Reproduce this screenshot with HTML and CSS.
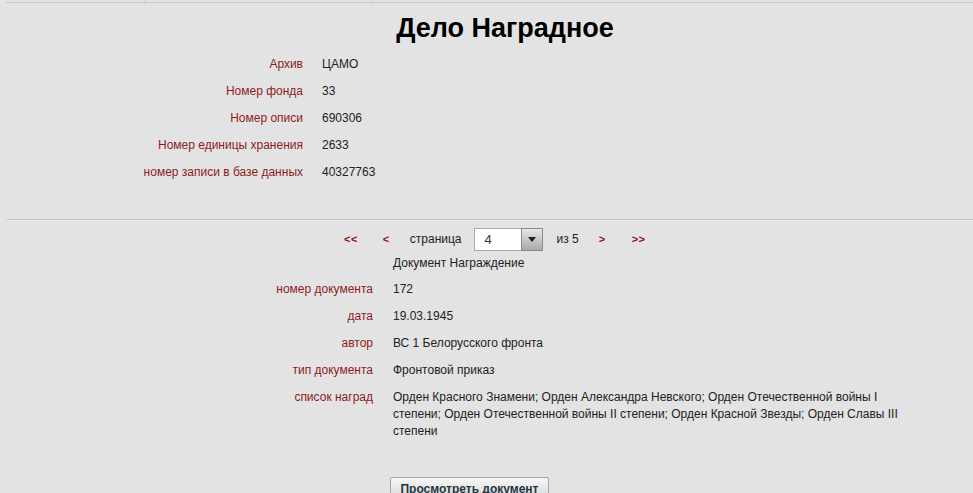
FILE: index.html
```html
<!DOCTYPE html>
<html lang="ru">
<head>
<meta charset="utf-8">
<title>Дело Наградное</title>
<link rel="stylesheet" href="styles.css">
</head>
<body>
<div class="page">
  <div class="topbar">
    <div class="tab tab-1"></div>
    <div class="tab tab-2"></div>
    <div class="tab tab-3"></div>
  </div>
  <h1 class="title">Дело Наградное</h1>
  <div class="info info-main">
    <div class="lbl">Архив</div><div class="val">ЦАМО</div>
    <div class="lbl">Номер фонда</div><div class="val">33</div>
    <div class="lbl">Номер описи</div><div class="val">690306</div>
    <div class="lbl">Номер единицы хранения</div><div class="val">2633</div>
    <div class="lbl">номер записи в базе данных</div><div class="val">40327763</div>
  </div>
  <div class="divider"></div>
  <div class="pager">
    <span class="arrow a-first">&lt;&lt;</span>
    <span class="arrow a-prev">&lt;</span>
    <span class="ptext p-page">страница</span>
    <span class="select">
      <span class="select-value">4</span>
      <span class="select-btn"><span class="tri"></span></span>
    </span>
    <span class="ptext p-of">из 5</span>
    <span class="arrow a-next">&gt;</span>
    <span class="arrow a-last">&gt;&gt;</span>
  </div>
  <div class="info info-doc">
    <div class="lbl first"></div><div class="val first">Документ Награждение</div>
    <div class="lbl">номер документа</div><div class="val">172</div>
    <div class="lbl">дата</div><div class="val">19.03.1945</div>
    <div class="lbl">автор</div><div class="val">ВС 1 Белорусского фронта</div>
    <div class="lbl">тип документа</div><div class="val">Фронтовой приказ</div>
    <div class="lbl">список наград</div><div class="val">Орден Красного Знамени; Орден Александра Невского; Орден Отечественной войны I степени; Орден Отечественной войны II степени; Орден Красной Звезды; Орден Славы III степени</div>
  </div>
  <div class="actions">
    <button class="btn" type="button">Просмотреть документ</button>
  </div>
</div>
</body>
</html>
```
FILE: styles.css
```css
html, body {
  margin: 0;
  padding: 0;
  background: #e3e3e3;
  overflow: hidden;
}
body {
  font-family: "Liberation Sans", Arial, sans-serif;
  font-size: 12px;
  color: #222;
  width: 973px;
  height: 493px;
}
.page {
  padding-left: 6px;
}
.topbar {
  display: flex;
  height: 2px;
  border-bottom: 1px solid #c4cbc9;
}
.tab {
  height: 2px;
  border-right: 1px solid #cdd3d1;
}
.tab-1 { width: 138px; }
.tab-2 { width: 226px; }
.tab-3 { flex: 1; border-right: none; }

.title {
  margin: 10px 0 0 0;
  font-size: 27px;
  line-height: 30px;
  font-weight: bold;
  color: #000;
  text-align: center;
  padding-left: 31px;
}
.info {
  display: grid;
  column-gap: 19px;
  align-items: start;
}
.info-main {
  margin-top: 8px;
  grid-template-columns: 297px auto;
}
.info-doc {
  grid-template-columns: 367px 515px;
  column-gap: 20px;
}
.lbl, .val {
  padding: 5px 0;
  line-height: 17px;
}
.lbl {
  text-align: right;
  color: #8e1c1c;
}
.val {
  color: #222;
}
.lbl.first, .val.first {
  padding-bottom: 4px;
}
.divider {
  margin-top: 33px;
  height: 1px;
  background: #c2c9c7;
  border-bottom: 1px solid #ececec;
}
.pager {
  display: flex;
  align-items: center;
  height: 22px;
  margin-top: 7px;
  padding-left: 338px;
}
.arrow {
  font-weight: bold;
  color: #8b1010;
  font-size: 11px;
  letter-spacing: 0.5px;
}
.a-prev { margin-left: 25px; }
.p-page { margin-left: 20px; }
.select {
  margin-left: 12px;
  display: flex;
  height: 23px;
  box-sizing: border-box;
}
.select-value {
  width: 47px;
  box-sizing: border-box;
  height: 23px;
  background: #fff;
  border: 1px solid #a9a9a9;
  border-right: none;
  padding-left: 10px;
  font-size: 13px;
  line-height: 21px;
  color: #1c3a44;
}
.select-btn {
  width: 22px;
  height: 23px;
  box-sizing: border-box;
  border: 1px solid #8a8a8a;
  background: linear-gradient(#e8e8e8, #a8a8a8);
  display: flex;
  align-items: center;
  justify-content: center;
}
.tri {
  width: 0;
  height: 0;
  border-left: 4px solid transparent;
  border-right: 4px solid transparent;
  border-top: 5px solid #222;
  margin-top: 1px;
}
.p-of { margin-left: 14px; }
.a-next { margin-left: 20px; }
.a-last { margin-left: 26px; }

.actions {
  margin-top: 32px;
  padding-left: 384px;
}
.btn {
  font-family: "Liberation Sans", Arial, sans-serif;
  font-size: 12px;
  font-weight: bold;
  color: #1d3742;
  width: 159px;
  height: 24px;
  border: 1px solid #a4a4a4;
  border-radius: 2px;
  background: linear-gradient(#f6f6f6, #d6d6d6);
  padding: 0;
  line-height: 22px;
}
```
